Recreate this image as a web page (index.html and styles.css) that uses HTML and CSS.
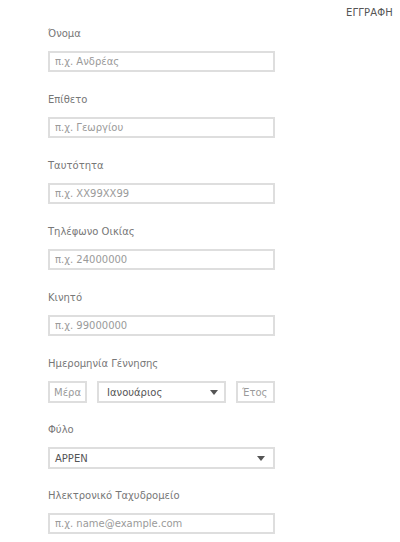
FILE: index.html
```html
<!DOCTYPE html>
<html lang="el">
<head>
<meta charset="utf-8">
<title>Εγγραφή</title>
<link rel="stylesheet" href="styles.css">
</head>
<body>
<div class="page">
  <div class="header">ΕΓΓΡΑΦΗ</div>
  <form class="form">
    <div class="field">
      <label class="label">Όνομα</label>
      <input class="input" type="text" placeholder="π.χ. Ανδρέας">
    </div>
    <div class="field">
      <label class="label">Επίθετο</label>
      <input class="input" type="text" placeholder="π.χ. Γεωργίου">
    </div>
    <div class="field">
      <label class="label">Ταυτότητα</label>
      <input class="input" type="text" placeholder="π.χ. XX99XX99">
    </div>
    <div class="field">
      <label class="label">Τηλέφωνο Οικίας</label>
      <input class="input" type="text" placeholder="π.χ. 24000000">
    </div>
    <div class="field">
      <label class="label">Κινητό</label>
      <input class="input" type="text" placeholder="π.χ. 99000000">
    </div>
    <div class="field">
      <label class="label">Ημερομηνία Γέννησης</label>
      <div class="date-row">
        <input class="input small" type="text" placeholder="Μέρα">
        <div class="select month"><span>Ιανουάριος</span><svg class="arrow" width="8" height="5" viewBox="0 0 8 5"><path d="M0 0H8L4 5Z" fill="#555"/></svg></div>
        <input class="input small" type="text" placeholder="Έτος">
      </div>
    </div>
    <div class="field">
      <label class="label">Φύλο</label>
      <div class="select"><span>ΑΡΡΕΝ</span><svg class="arrow" width="8" height="5" viewBox="0 0 8 5"><path d="M0 0H8L4 5Z" fill="#555"/></svg></div>
    </div>
    <div class="field">
      <label class="label">Ηλεκτρονικό Ταχυδρομείο</label>
      <input class="input" type="text" placeholder="π.χ. name@example.com">
    </div>
  </form>
</div>
</body>
</html>
```

FILE: styles.css
```css
html, body {
  margin: 0;
  padding: 0;
  background: #ffffff;
}
.page {
  width: 400px;
  font-family: "DejaVu Sans", "Open Sans", sans-serif;
  font-size: 10px;
  color: #777;
}
.header {
  display: flex;
  justify-content: flex-end;
  padding: 6px 7px 0 0;
  line-height: 13px;
  height: 13px;
  font-size: 10px;
  color: #555;
  letter-spacing: 0.2px;
}
.form {
  display: flex;
  flex-direction: column;
  padding: 8px 0 0 48px;
  width: 227px;
}
.field {
  display: flex;
  flex-direction: column;
  height: 66px;
}
.label {
  line-height: 14px;
  height: 14px;
  margin-bottom: 10px;
  color: #777;
}
.input {
  box-sizing: border-box;
  width: 227px;
  height: 21px;
  margin: 0;
  padding: 0 5px;
  border: 2px solid #dedede;
  border-radius: 0;
  outline: none;
  font-family: "DejaVu Sans", "Open Sans", sans-serif;
  font-size: 10px;
  color: #555;
  background: #fff;
}
.input::placeholder {
  color: #9a9a9a;
}
.date-row {
  display: grid;
  grid-template-columns: 39px 1fr 39px;
  column-gap: 10px;
  width: 227px;
}
.input.small {
  width: 39px;
  height: 22px;
  padding: 0 4px;
}
.select {
  box-sizing: border-box;
  display: flex;
  align-items: center;
  justify-content: space-between;
  width: 227px;
  height: 22px;
  padding: 0 8px 0 5px;
  border: 2px solid #dedede;
  color: #555;
  background: #fff;
}
.select.month {
  width: auto;
  padding: 0 6px 0 8px;
}
.arrow {
  display: block;
}
```
